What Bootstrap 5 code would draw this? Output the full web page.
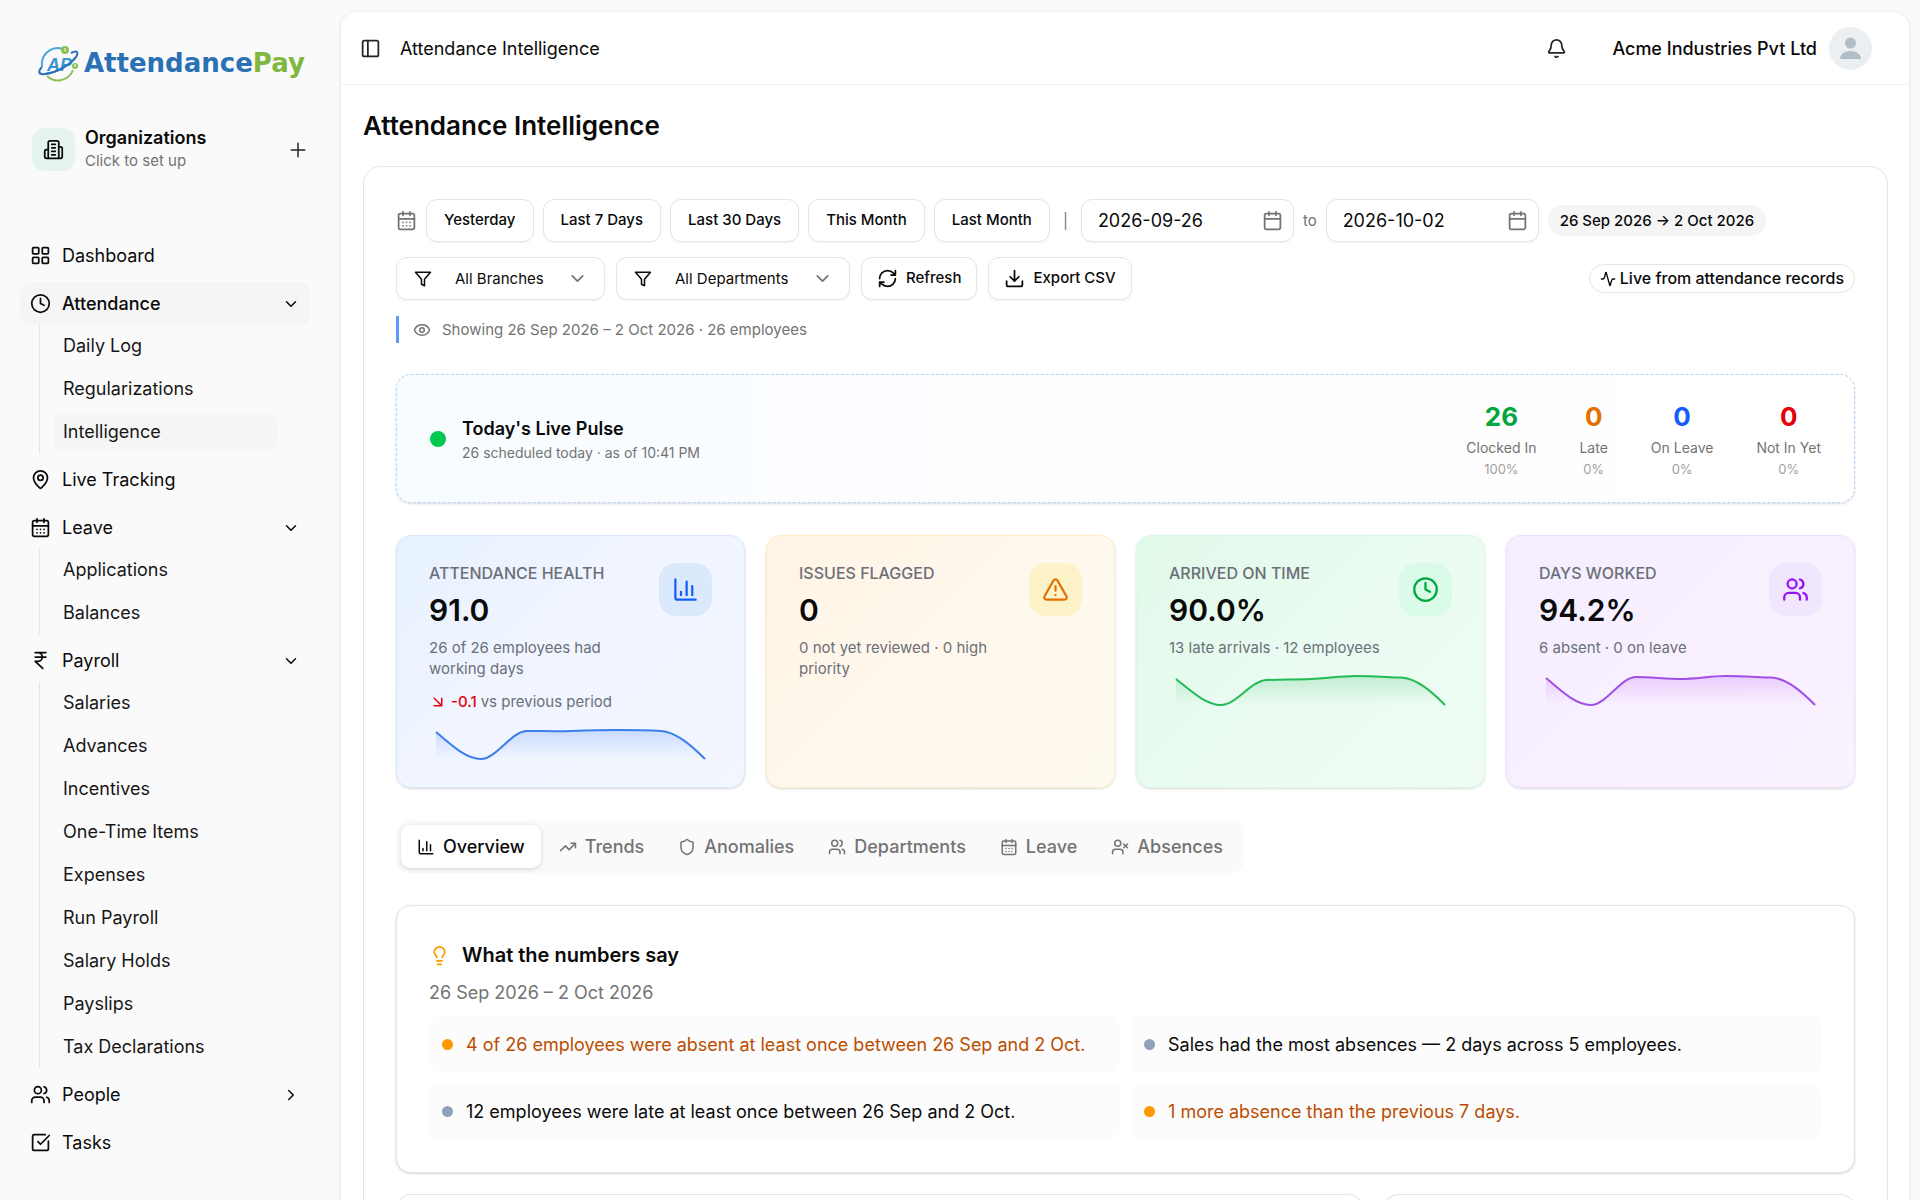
<!DOCTYPE html>
<html lang="en">
<head>
<meta charset="utf-8">
<meta name="viewport" content="width=device-width, initial-scale=1">
<title>Attendance Intelligence</title>
<link href="https://cdn.jsdelivr.net/npm/bootstrap@5.3.0/dist/css/bootstrap.min.css" rel="stylesheet">
<style>
  :root { --ink:#0a0a0a; --soft:#737373; --line:#e5e5e5; --shade:0 1px 3px rgba(0,0,0,.1), 0 1px 2px rgba(0,0,0,.06); }
  body { font-family:Inter,"Liberation Sans",sans-serif; font-size:18px; line-height:27px; color:var(--ink); background:#fafafa; }
  a { color:inherit; text-decoration:none; }
  ul { list-style:none; margin:0; padding:0; }
  svg { flex:none; }
  .ico { fill:none; stroke:currentColor; stroke-width:2; stroke-linecap:round; stroke-linejoin:round; width:21px; height:21px; }
  .ico-sm { width:18px; height:18px; }
  .text-soft { color:var(--soft); }
  .fs-note { font-size:15px; line-height:21px; }

  /* sidebar */
  .side { width:341px; flex:none; padding:43px 31px 0 20px; }
  .brand { padding-left:17px; gap:4px; height:40px; font-family:"DejaVu Sans",sans-serif; font-weight:700; font-size:26px; color:#2a70b5; }
  .brand em { font-style:normal; color:#7fb83f; }
  .org { padding:0 3px 0 12px; margin-top:45px; gap:10px; height:43px; }
  .org-mark { width:43px; height:43px; border-radius:13px; background:#e5f4ee; }
  .org-text { padding-bottom:3px; }
  .org-name { font-weight:600; line-height:25px; }
  .menu { margin-top:63px; gap:5px; }
  .menu-link { height:43px; padding:0 10px; gap:11px; border-radius:10px; }
  .menu-link.open { background:#f5f5f5; font-weight:500; }
  .menu-link .chev { width:18px; height:18px; margin-left:auto; }
  .submenu { margin:0 33px 0 19px; padding:2px 0 2px 13px; border-left:1px solid var(--line); gap:5px; }
  .submenu a { display:block; height:38px; line-height:38px; padding:0 10px; border-radius:8px; color:#171717; }
  .submenu a.on { background:#f5f5f5; }

  /* main panel */
  .panel { background:#fff; margin:12px 11px 0 0; border-radius:16px 16px 0 0; box-shadow:0 1px 4px rgba(0,0,0,.12); }
  .topbar { height:73px; padding:0 37px 0 19px; border-bottom:1px solid #f0f0f0; }
  .crumb { margin-left:19px; }
  .bell { margin-right:45px; }
  .avatar { width:43px; height:43px; }
  .page-body { padding:24px 21px 0 22px; }
  .page-title { font-size:26px; line-height:34px; font-weight:600; margin:0 0 23px; }
  .frame { border:1px solid var(--line); border-radius:18px; padding:32px; }
  .dates { gap:9px; }
  .filters { gap:11px; margin-top:15px; }
  .tool, .field { height:43px; border:1px solid var(--line); border-radius:11px; background:#fff; box-shadow:0 1px 2px rgba(0,0,0,.05); }
  .tool { padding:0 17px; font-size:15px; font-weight:500; color:var(--ink); }
  .tool:hover { background:#f7f7f7; }
  .tool-ico { padding:0 15px; gap:8px; }
  .field { padding:0 10px 0 16px; width:213px; }
  .field input { border:0; outline:0; padding:0; background:none; min-width:0; width:100%; font-size:18px; color:var(--ink); }
  .pick { padding:0 16px 0 17px; gap:23px; }
  .pick select { appearance:none; border:0; outline:0; padding:0; background:none; font-size:15px; color:var(--ink); }
  .tag { font-size:15px; line-height:21px; font-weight:500; padding:4px 11px; border-radius:15px; border:1px solid transparent; }
  .tag-gray { background:#f5f5f5; }
  .tag-line { font-size:16px; border-color:var(--line); padding:3px 10px; gap:4px; }
  .tag-line .ico { width:16px; height:16px; }
  .scope { border-left:3px solid #5a9cf8; padding:3px 0 3px 14px; gap:11px; margin-top:16px; height:27px; }

  .pulse { margin-top:31px; border:1px dashed #b5d4fb; border-radius:15px; padding:0 33px; background:linear-gradient(90deg,#f7fcff,#fdfdff 45%,#fff); box-shadow:var(--shade); height:129px; }
  .pulse-note { font-size:14px; line-height:21px; }
  .dot { border-radius:50%; flex:none; width:16px; height:16px; background:#00c950; }
  .stats { gap:43px; text-align:center; }
  .stats b { display:block; font-size:26px; line-height:40px; font-weight:700; }
  .stats small { display:block; font-size:13px; line-height:22px; color:#a1a1a1; }
  .c-green { color:#00a63e; } .c-amber { color:#e17100; } .c-blue { color:#155dfc; } .c-red { color:#e7000b; } .c-gold { color:#fe9a00; }

  .kpis { display:grid; grid-template-columns:repeat(4,1fr); gap:21px; margin-top:32px; }
  .kpi { border:1px solid; border-radius:15px; padding:27px 32px 21px; box-shadow:var(--shade); }
  .kpi h2 { font-size:16px; line-height:20px; font-weight:500; text-transform:uppercase; margin:0 0 6px; color:#6b7078; }
  .kpi strong { display:block; font-size:30px; line-height:43px; font-weight:600; margin-bottom:5px; }
  .kpi p { margin:0; color:#6b7078; }
  .kpi .badge-ico { width:53px; height:53px; border-radius:17px; flex:none; }
  .kpi .badge-ico svg { width:27px; height:27px; }
  .kpi .spark { display:block; width:100%; height:43px; margin-top:11px; }
  .kpi-blue { background:linear-gradient(135deg,#e6f1ff,#f0f5ff 40%,#f3f6ff); border-color:#dae6fd; }
  .kpi-blue .badge-ico { background:#dbe9fd; color:#155dfc; }
  .kpi-amber { background:linear-gradient(135deg,#fff4e5,#fff7ec 40%,#fffaf0); border-color:#fdeec6; }
  .kpi-amber .badge-ico { background:#fdf2c8; color:#e17100; }
  .kpi-green { background:linear-gradient(135deg,#e1f9e9,#eafbf1 45%,#effdf4); border-color:#d9f9e6; }
  .kpi-green .badge-ico { background:#dafbe8; color:#00a63e; }
  .kpi-violet { background:linear-gradient(135deg,#f4eeff,#f8f0ff 45%,#faf2ff); border-color:#eee3fd; }
  .kpi-violet .badge-ico { background:#f0e7fe; color:#9810fa; }

  .tabs { display:inline-flex; gap:2px; margin-top:32px; background:#fafafa; border-radius:13px; padding:5px; height:53px; }
  .tab { border:0; background:none; height:43px; padding:0 16px; gap:8px; border-radius:9px; font-weight:500; color:var(--soft); }
  .tab.on { background:#fff; color:var(--ink); box-shadow:0 1px 4px rgba(0,0,0,.16); }

  .sheet { border:1px solid var(--line); border-radius:15px; background:#fff; box-shadow:var(--shade); }
  .notes { margin-top:32px; padding:33px 32px 31px; height:268px; }
  .notes h2 { font-size:20px; line-height:32px; font-weight:600; margin:0; }
  .notes-grid { display:grid; grid-template-columns:1fr 1fr; gap:11px; margin-top:10px; }
  .note { background:#fcfcfc; border-radius:11px; padding:14px 13px; gap:13px; height:56px; line-height:27px; }
  .note .dot { width:11px; height:11px; background:#90a1b9; }
  .note.warn { color:#bb4d00; }
  .note.warn .dot { background:#fe9a00; }
  .lower { display:grid; grid-template-columns:966fr 471fr; gap:21px; margin-top:21px; }
  .lower .sheet { min-height:400px; }
</style>
<script src="https://cdn.jsdelivr.net/npm/bootstrap@5.3.0/dist/js/bootstrap.bundle.min.js"></script>
</head>
<body>
<svg class="d-none" aria-hidden="true">
  <symbol id="i-grid" viewBox="0 0 24 24"><rect x="3" y="3" width="7" height="7" rx="1"/><rect x="14" y="3" width="7" height="7" rx="1"/><rect x="14" y="14" width="7" height="7" rx="1"/><rect x="3" y="14" width="7" height="7" rx="1"/></symbol>
  <symbol id="i-clock" viewBox="0 0 24 24"><circle cx="12" cy="12" r="10"/><path d="M12 6v6l4 2"/></symbol>
  <symbol id="i-pin" viewBox="0 0 24 24"><path d="M20 10c0 5-5.500 10.200-7.400 11.800a1 1 0 0 1-1.200 0C9.500 20.200 4 15 4 10a8 8 0 0 1 16 0"/><circle cx="12" cy="10" r="3"/></symbol>
  <symbol id="i-days" viewBox="0 0 24 24"><path d="M8 2v4M16 2v4M3 10h18"/><rect x="3" y="4" width="18" height="18" rx="2"/><path d="M8 14h.01M12 14h.01M16 14h.01M8 18h.01M12 18h.01M16 18h.01"/></symbol>
  <symbol id="i-cal" viewBox="0 0 24 24"><path d="M8 2v4M16 2v4M3 10h18"/><rect x="3" y="4" width="18" height="18" rx="2"/></symbol>
  <symbol id="i-rupee" viewBox="0 0 24 24"><path d="M6 3h12M6 8h12M6 13l8.500 8M6 13h3c6.700 0 6.700-10 0-10"/></symbol>
  <symbol id="i-users" viewBox="0 0 24 24"><path d="M16 21v-2a4 4 0 0 0-4-4H6a4 4 0 0 0-4 4v2M22 21v-2a4 4 0 0 0-3-3.870M16 3.130a4 4 0 0 1 0 7.750"/><circle cx="9" cy="7" r="4"/></symbol>
  <symbol id="i-userx" viewBox="0 0 24 24"><path d="M16 21v-2a4 4 0 0 0-4-4H6a4 4 0 0 0-4 4v2M17 8l5 5M22 8l-5 5"/><circle cx="9" cy="7" r="4"/></symbol>
  <symbol id="i-task" viewBox="0 0 24 24"><path d="M21 10.500V19a2 2 0 0 1-2 2H5a2 2 0 0 1-2-2V5a2 2 0 0 1 2-2h12.500M9 11l3 3L22 4"/></symbol>
  <symbol id="i-down" viewBox="0 0 24 24"><path d="m6 9 6 6 6-6"/></symbol>
  <symbol id="i-right" viewBox="0 0 24 24"><path d="m9 18 6-6-6-6"/></symbol>
  <symbol id="i-plus" viewBox="0 0 24 24"><path d="M3 12h18M12 3v18"/></symbol>
  <symbol id="i-build" viewBox="0 0 24 24"><path d="M6 22V4a2 2 0 0 1 2-2h8a2 2 0 0 1 2 2v18ZM6 12H4a2 2 0 0 0-2 2v6a2 2 0 0 0 2 2h2M18 9h2a2 2 0 0 1 2 2v9a2 2 0 0 1-2 2h-2M10 6h4M10 10h4M10 14h4M10 18h4"/></symbol>
  <symbol id="i-panel" viewBox="0 0 24 24"><rect x="3" y="3" width="18" height="18" rx="2"/><path d="M9 3v18"/></symbol>
  <symbol id="i-bell" viewBox="0 0 24 24"><path d="M10.300 21a2 2 0 0 0 3.400 0M3.300 15.300A1 1 0 0 0 4 17h16a1 1 0 0 0 .700-1.700C19.400 14 18 12.500 18 8A6 6 0 0 0 6 8c0 4.500-1.400 6-2.700 7.300"/></symbol>
  <symbol id="i-filter" viewBox="0 0 24 24"><path d="M22 3H2l8 9.460V19l4 2v-8.540z"/></symbol>
  <symbol id="i-refresh" viewBox="0 0 24 24"><path d="M3 12a9 9 0 0 1 9-9 9.750 9.750 0 0 1 6.740 2.740L21 8M21 3v5h-5M21 12a9 9 0 0 1-9 9 9.750 9.750 0 0 1-6.740-2.740L3 16M8 16H3v5"/></symbol>
  <symbol id="i-save" viewBox="0 0 24 24"><path d="M21 15v4a2 2 0 0 1-2 2H5a2 2 0 0 1-2-2v-4M7 10l5 5 5-5M12 15V3"/></symbol>
  <symbol id="i-pulse" viewBox="0 0 24 24"><path d="M22 12h-2.500a2 2 0 0 0-1.900 1.500l-2.350 8.300a.25.25 0 0 1-.5 0L9.250 2.200a.25.25 0 0 0-.5 0l-2.350 8.300A2 2 0 0 1 4.500 12H2"/></symbol>
  <symbol id="i-eye" viewBox="0 0 24 24"><path d="M2.060 12.350a1 1 0 0 1 0-.7 10.750 10.750 0 0 1 19.880 0 1 1 0 0 1 0 .7 10.750 10.750 0 0 1-19.880 0"/><circle cx="12" cy="12" r="3"/></symbol>
  <symbol id="i-chart" viewBox="0 0 24 24"><path d="M3 3v16a2 2 0 0 0 2 2h16M18 17V9M13 17V5M8 17v-3"/></symbol>
  <symbol id="i-warn" viewBox="0 0 24 24"><path d="m21.730 18-8-14a2 2 0 0 0-3.480 0l-8 14A2 2 0 0 0 4 21h16a2 2 0 0 0 1.730-3M12 9v4M12 17h.01"/></symbol>
  <symbol id="i-trend" viewBox="0 0 24 24"><path d="m22 7-8.500 8.500-5-5L2 17M16 7h6v6"/></symbol>
  <symbol id="i-shield" viewBox="0 0 24 24"><path d="M20 13c0 5-3.500 7.500-7.660 8.950a1 1 0 0 1-.67-.01C7.500 20.500 4 18 4 13V6a1 1 0 0 1 1-1c2 0 4.500-1.200 6.240-2.720a1.170 1.170 0 0 1 1.520 0C14.510 3.810 17 5 19 5a1 1 0 0 1 1 1z"/></symbol>
  <symbol id="i-fall" viewBox="0 0 24 24"><path d="m7 7 10 10M17 7v10H7"/></symbol>
  <symbol id="i-bulb" viewBox="0 0 24 24"><path d="M15 14c.2-1 .7-1.700 1.500-2.500 1-.9 1.500-2.200 1.500-3.500A6 6 0 0 0 6 8c0 1 .2 2.200 1.500 3.500.7.7 1.300 1.500 1.500 2.500M9 18h6M10 22h4"/></symbol>
</svg>

<div class="d-flex vh-100 overflow-hidden">
  <aside class="side">
    <a href="#" class="brand d-flex align-items-center">
      <svg width="43" height="40" viewBox="0 0 43 40" aria-hidden="true">
        <path d="M5 24A16 16 0 0 1 30 8" fill="none" stroke="#4aa6e0" stroke-width="2"/>
        <path d="M10 33A16 16 0 0 0 36 27" fill="none" stroke="#8cc152" stroke-width="2"/>
        <path d="M5 24C1 28 1 32 8 31 19 30 33 22 39 14 42 9 40 7 34 10" fill="none" stroke="#2a70b5" stroke-width="2"/>
        <circle cx="28" cy="7" r="4" fill="#8cc152"/><circle cx="38" cy="23" r="3" fill="#8cc152"/>
        <path d="M28 5v3h1M38 21v3" fill="none" stroke="#fff" stroke-width="1"/>
        <text x="10" y="28" font-family="Liberation Sans, sans-serif" font-style="italic" font-weight="700" font-size="18" fill="#3b93d4">AP</text>
        <path d="M8 31C19 30 33 22 39 14" fill="none" stroke="#2a70b5" stroke-width="2"/>
      </svg>
      <span>Attendance<em>Pay</em></span>
    </a>
    <div class="org d-flex align-items-center">
      <span class="org-mark d-flex align-items-center justify-content-center"><svg class="ico"><use href="#i-build"/></svg></span>
      <div class="org-text flex-grow-1"><div class="org-name">Organizations</div><div class="fs-note text-soft">Click to set up</div></div>
      <button type="button" class="btn p-0 border-0 d-flex" aria-label="Add organization"><svg class="ico ico-sm"><use href="#i-plus"/></svg></button>
    </div>
    <nav>
      <ul class="menu d-flex flex-column">
        <li><a href="#" class="menu-link d-flex align-items-center"><svg class="ico"><use href="#i-grid"/></svg>Dashboard</a></li>
        <li><a href="#" class="menu-link open d-flex align-items-center"><svg class="ico"><use href="#i-clock"/></svg>Attendance<svg class="ico chev"><use href="#i-down"/></svg></a>
          <ul class="submenu d-flex flex-column"><li><a href="#">Daily Log</a></li><li><a href="#">Regularizations</a></li><li><a href="#" class="on">Intelligence</a></li></ul></li>
        <li><a href="#" class="menu-link d-flex align-items-center"><svg class="ico"><use href="#i-pin"/></svg>Live Tracking</a></li>
        <li><a href="#" class="menu-link d-flex align-items-center"><svg class="ico"><use href="#i-days"/></svg>Leave<svg class="ico chev"><use href="#i-down"/></svg></a>
          <ul class="submenu d-flex flex-column"><li><a href="#">Applications</a></li><li><a href="#">Balances</a></li></ul></li>
        <li><a href="#" class="menu-link d-flex align-items-center"><svg class="ico"><use href="#i-rupee"/></svg>Payroll<svg class="ico chev"><use href="#i-down"/></svg></a>
          <ul class="submenu d-flex flex-column"><li><a href="#">Salaries</a></li><li><a href="#">Advances</a></li><li><a href="#">Incentives</a></li><li><a href="#">One-Time Items</a></li><li><a href="#">Expenses</a></li><li><a href="#">Run Payroll</a></li><li><a href="#">Salary Holds</a></li><li><a href="#">Payslips</a></li><li><a href="#">Tax Declarations</a></li></ul></li>
        <li><a href="#" class="menu-link d-flex align-items-center"><svg class="ico"><use href="#i-users"/></svg>People<svg class="ico chev"><use href="#i-right"/></svg></a></li>
        <li><a href="#" class="menu-link d-flex align-items-center"><svg class="ico"><use href="#i-task"/></svg>Tasks</a></li>
      </ul>
    </nav>
  </aside>

  <main class="panel flex-grow-1">
    <header class="topbar d-flex align-items-center">
      <button type="button" class="btn p-0 border-0 d-flex" aria-label="Toggle sidebar"><svg class="ico"><use href="#i-panel"/></svg></button>
      <span class="crumb">Attendance Intelligence</span>
      <button type="button" class="bell btn p-0 border-0 d-flex ms-auto" aria-label="Notifications"><svg class="ico"><use href="#i-bell"/></svg></button>
      <a href="#" class="d-flex align-items-center gap-2 fw-medium">Acme Industries Pvt Ltd
        <svg class="avatar ms-1" viewBox="0 0 43 43"><circle cx="21.500" cy="21.500" r="21.500" fill="#eceff1"/><circle cx="21.500" cy="16" r="5.500" fill="#b0bec5"/><path d="M11 32c0-5 5-8 10.500-8S32 27 32 32z" fill="#b0bec5"/></svg></a>
    </header>

    <div class="page-body">
      <h1 class="page-title">Attendance Intelligence</h1>
      <section class="frame">
        <div class="dates d-flex align-items-center">
          <svg class="ico text-soft"><use href="#i-days"/></svg>
          <button type="button" class="btn tool">Yesterday</button>
          <button type="button" class="btn tool">Last 7 Days</button>
          <button type="button" class="btn tool">Last 30 Days</button>
          <button type="button" class="btn tool">This Month</button>
          <button type="button" class="btn tool">Last Month</button>
          <span class="fs-note text-soft px-1">|</span>
          <label class="field d-flex align-items-center"><input type="text" value="2026-09-26" aria-label="From date"><svg class="ico text-soft"><use href="#i-cal"/></svg></label>
          <span class="fs-note text-soft">to</span>
          <label class="field d-flex align-items-center"><input type="text" value="2026-10-02" aria-label="To date"><svg class="ico text-soft"><use href="#i-cal"/></svg></label>
          <span class="tag tag-gray">26 Sep 2026 → 2 Oct 2026</span>
        </div>
        <div class="filters d-flex align-items-center">
          <label class="field pick w-auto d-flex align-items-center"><svg class="ico ico-sm"><use href="#i-filter"/></svg><select aria-label="Branch"><option>All Branches</option></select><svg class="ico text-soft"><use href="#i-down"/></svg></label>
          <label class="field pick w-auto d-flex align-items-center"><svg class="ico ico-sm"><use href="#i-filter"/></svg><select aria-label="Department"><option>All Departments</option></select><svg class="ico text-soft"><use href="#i-down"/></svg></label>
          <button type="button" class="btn tool tool-ico d-flex align-items-center"><svg class="ico"><use href="#i-refresh"/></svg>Refresh</button>
          <button type="button" class="btn tool tool-ico d-flex align-items-center"><svg class="ico"><use href="#i-save"/></svg>Export CSV</button>
          <span class="tag tag-line d-flex align-items-center ms-auto"><svg class="ico"><use href="#i-pulse"/></svg>Live from attendance records</span>
        </div>
        <div class="scope d-flex align-items-center fs-note text-soft"><svg class="ico ico-sm"><use href="#i-eye"/></svg>Showing 26 Sep 2026 – 2 Oct 2026 · 26 employees</div>

        <section class="pulse d-flex align-items-center justify-content-between">
          <div class="d-flex align-items-center gap-3">
            <span class="dot"></span>
            <div><div class="fw-semibold">Today's Live Pulse</div><div class="pulse-note text-soft">26 scheduled today · as of 10:41 PM</div></div>
          </div>
          <div class="stats d-flex pulse-note text-soft">
            <div><b class="c-green">26</b>Clocked In<small>100%</small></div>
            <div><b class="c-amber">0</b>Late<small>0%</small></div>
            <div><b class="c-blue">0</b>On Leave<small>0%</small></div>
            <div><b class="c-red">0</b>Not In Yet<small>0%</small></div>
          </div>
        </section>

        <section class="kpis">
          <article class="kpi kpi-blue">
            <div class="d-flex justify-content-between">
              <div><h2>Attendance health</h2><strong>91.0</strong><p class="fs-note">26 of 26 employees had working days</p></div>
              <span class="badge-ico d-flex align-items-center justify-content-center"><svg class="ico"><use href="#i-chart"/></svg></span>
            </div>
            <p class="fs-note d-flex align-items-center gap-1 mt-2 pt-1"><svg class="ico ico-sm c-red"><use href="#i-fall"/></svg><span class="fw-medium c-red">-0.1</span>vs previous period</p>
            <svg class="spark" viewBox="0 0 283 43" preserveAspectRatio="none"><defs><linearGradient id="g1" x1="0" y1="0" x2="0" y2="1"><stop offset="0" stop-color="#2b6fff" stop-opacity=".2"/><stop offset="1" stop-color="#2b6fff" stop-opacity="0"/></linearGradient></defs><path d="M7 9C22 22 37 36 52 36S82 9 97 8C112 8 127 8.500 142 8S172 7 187 7S217 7 232 8S262 22 276 36H7z" fill="url(#g1)"/><path d="M7 9C22 22 37 36 52 36S82 9 97 8C112 8 127 8.500 142 8S172 7 187 7S217 7 232 8S262 22 276 36" fill="none" stroke="#3b7fe8" stroke-width="2"/></svg>
          </article>
          <article class="kpi kpi-amber">
            <div class="d-flex justify-content-between">
              <div><h2>Issues flagged</h2><strong>0</strong><p class="fs-note">0 not yet reviewed · 0 high priority</p></div>
              <span class="badge-ico d-flex align-items-center justify-content-center"><svg class="ico"><use href="#i-warn"/></svg></span>
            </div>
          </article>
          <article class="kpi kpi-green">
            <div class="d-flex justify-content-between">
              <div><h2>Arrived on time</h2><strong>90.0%</strong><p class="fs-note">13 late arrivals · 12 employees</p></div>
              <span class="badge-ico d-flex align-items-center justify-content-center"><svg class="ico"><use href="#i-clock"/></svg></span>
            </div>
            <svg class="spark" viewBox="0 0 283 43" preserveAspectRatio="none"><defs><linearGradient id="g2" x1="0" y1="0" x2="0" y2="1"><stop offset="0" stop-color="#00a63e" stop-opacity=".18"/><stop offset="1" stop-color="#00a63e" stop-opacity="0"/></linearGradient></defs><path d="M7 10C22 22 37 36 52 36S82 12 97 11C112 10.500 127 10.500 142 10S172 7 187 7S217 8 232 8.500S262 22 276 36H7z" fill="url(#g2)"/><path d="M7 10C22 22 37 36 52 36S82 12 97 11C112 10.500 127 10.500 142 10S172 7 187 7S217 8 232 8.500S262 22 276 36" fill="none" stroke="#22bb55" stroke-width="2"/></svg>
          </article>
          <article class="kpi kpi-violet">
            <div class="d-flex justify-content-between">
              <div><h2>Days worked</h2><strong>94.2%</strong><p class="fs-note">6 absent · 0 on leave</p></div>
              <span class="badge-ico d-flex align-items-center justify-content-center"><svg class="ico"><use href="#i-users"/></svg></span>
            </div>
            <svg class="spark" viewBox="0 0 283 43" preserveAspectRatio="none"><defs><linearGradient id="g3" x1="0" y1="0" x2="0" y2="1"><stop offset="0" stop-color="#9810fa" stop-opacity=".16"/><stop offset="1" stop-color="#9810fa" stop-opacity="0"/></linearGradient></defs><path d="M7 9C22 22 37 36 52 36S82 8 97 8C112 8 127 10 142 10S172 7 187 7S217 8 232 8.500S262 22 276 36H7z" fill="url(#g3)"/><path d="M7 9C22 22 37 36 52 36S82 8 97 8C112 8 127 10 142 10S172 7 187 7S217 8 232 8.500S262 22 276 36" fill="none" stroke="#a24fe6" stroke-width="2"/></svg>
          </article>
        </section>

        <div class="tabs" role="tablist">
          <button type="button" role="tab" aria-selected="true" class="tab on d-flex align-items-center"><svg class="ico ico-sm"><use href="#i-chart"/></svg>Overview</button>
          <button type="button" role="tab" class="tab d-flex align-items-center"><svg class="ico ico-sm"><use href="#i-trend"/></svg>Trends</button>
          <button type="button" role="tab" class="tab d-flex align-items-center"><svg class="ico ico-sm"><use href="#i-shield"/></svg>Anomalies</button>
          <button type="button" role="tab" class="tab d-flex align-items-center"><svg class="ico ico-sm"><use href="#i-users"/></svg>Departments</button>
          <button type="button" role="tab" class="tab d-flex align-items-center"><svg class="ico ico-sm"><use href="#i-days"/></svg>Leave</button>
          <button type="button" role="tab" class="tab d-flex align-items-center"><svg class="ico ico-sm"><use href="#i-userx"/></svg>Absences</button>
        </div>

        <section class="sheet notes">
          <h2 class="d-flex align-items-center gap-2"><svg class="ico me-1 c-gold"><use href="#i-bulb"/></svg>What the numbers say</h2>
          <div class="text-soft mt-2">26 Sep 2026 – 2 Oct 2026</div>
          <div class="notes-grid">
            <div class="note warn d-flex align-items-center"><span class="dot"></span>4 of 26 employees were absent at least once between 26 Sep and 2 Oct.</div>
            <div class="note d-flex align-items-center"><span class="dot"></span>Sales had the most absences — 2 days across 5 employees.</div>
            <div class="note d-flex align-items-center"><span class="dot"></span>12 employees were late at least once between 26 Sep and 2 Oct.</div>
            <div class="note warn d-flex align-items-center"><span class="dot"></span>1 more absence than the previous 7 days.</div>
          </div>
        </section>
        <div class="lower"><section class="sheet"></section><section class="sheet"></section></div>
      </section>
    </div>
  </main>
</div>
</body>
</html>
